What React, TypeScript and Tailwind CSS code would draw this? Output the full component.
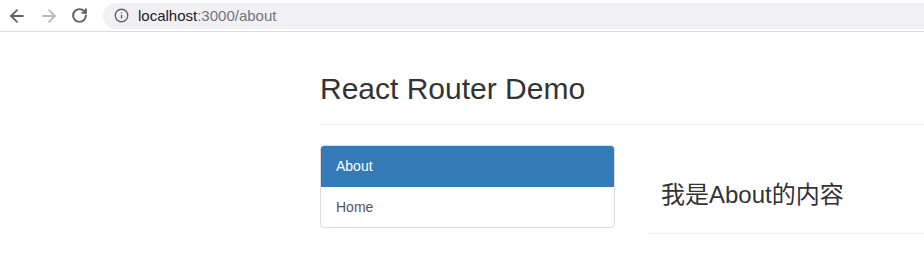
import React from 'react'
import { ArrowLeft, ArrowRight, RotateCw, Info } from 'lucide-react'

const font = { fontFamily: '"Liberation Sans", Arial, "Noto Sans CJK SC", sans-serif' }

function BrowserBar() {
  return (
    <div className="flex h-[32px] items-center border-b border-[#dadce0] bg-white">
      <div className="flex w-[103px] items-center pl-[7px]">
        <ArrowLeft className="h-[20px] w-[20px] text-[#5f6368]" strokeWidth={2.2} />
        <ArrowRight className="ml-[12px] h-[20px] w-[20px] text-[#b8babd]" strokeWidth={2.2} />
        <RotateCw className="ml-[12px] h-[17px] w-[17px] text-[#5f6368]" strokeWidth={2.8} />
      </div>
      <div className="flex h-[26px] flex-1 items-center rounded-l-full bg-[#f1f0f4] pl-[11px]">
        <Info className="h-[15px] w-[15px] text-[#5f6368]" strokeWidth={2.2} />
        <span className="ml-[9px] text-[15px] leading-none text-[#202124]">
          localhost<span className="text-[#70757a]">:3000/about</span>
        </span>
      </div>
    </div>
  )
}

export default function App() {
  const items = [
    { label: 'About', active: true },
    { label: 'Home', active: false },
  ]

  return (
    <div className="h-[278px] overflow-hidden bg-white" style={font}>
      <BrowserBar />

      <div className="pl-[320px]">
        <div className="mt-[40px] mb-[20px] border-b border-[#eee] pb-[9px]">
          <h2 className="mb-[10px] text-[30px] font-normal leading-[33px] text-[#333]">React Router Demo</h2>
        </div>

        <div className="flex">
          <div className="w-[295px]">
            <div className="overflow-hidden rounded-[4px] border border-[#ddd]">
              {items.map((it) => (
                <div
                  key={it.label}
                  className={
                    it.active
                      ? 'border-b border-[#337ab7] bg-[#337ab7] px-[15px] py-[10px] text-[14px] leading-[20px] text-white'
                      : 'px-[15px] py-[10px] text-[14px] leading-[20px] text-[#555]'
                  }
                >
                  {it.label}
                </div>
              ))}
            </div>
          </div>

          <div className="ml-[32px] flex-1">
            <div className="border-b border-[#eee] px-[14px] pt-[36px] pb-[15px]">
              <h3 className="mb-[10px] text-[24px] font-normal leading-[27px] text-[#333]">我是About的内容</h3>
            </div>
          </div>
        </div>
      </div>
    </div>
  )
}
